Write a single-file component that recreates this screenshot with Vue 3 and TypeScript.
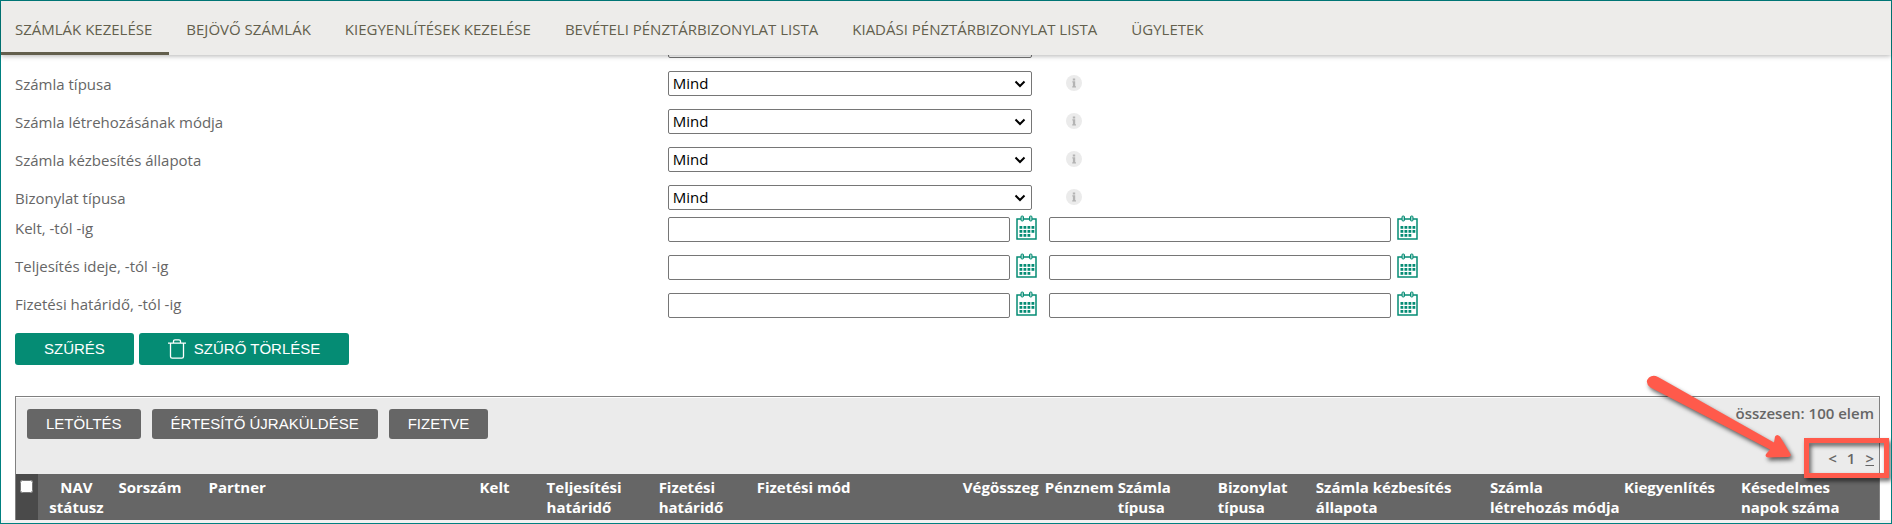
<script setup lang="ts">
import { ref } from 'vue'

interface Tab { label: string; active?: boolean }
interface Column { label: string; width: number; align?: 'center' | 'right' }

const tabs: Tab[] = [
  { label: 'SZÁMLÁK KEZELÉSE', active: true },
  { label: 'BEJÖVŐ SZÁMLÁK' },
  { label: 'KIEGYENLÍTÉSEK KEZELÉSE' },
  { label: 'BEVÉTELI PÉNZTÁRBIZONYLAT LISTA' },
  { label: 'KIADÁSI PÉNZTÁRBIZONYLAT LISTA' },
  { label: 'ÜGYLETEK' },
]

const selects = ref([
  { id: 'tipus', label: 'Számla típusa', value: 'Mind' },
  { id: 'mod', label: 'Számla létrehozásának módja', value: 'Mind' },
  { id: 'kezbesites', label: 'Számla kézbesítés állapota', value: 'Mind' },
  { id: 'bizonylat', label: 'Bizonylat típusa', value: 'Mind' },
])

const ranges = ref([
  { id: 'kelt', label: 'Kelt, -tól -ig', from: '', to: '' },
  { id: 'teljesites', label: 'Teljesítés ideje, -tól -ig', from: '', to: '' },
  { id: 'fizetes', label: 'Fizetési határidő, -tól -ig', from: '', to: '' },
])

const actions: string[] = ['LETÖLTÉS', 'ÉRTESÍTŐ ÚJRAKÜLDÉSE', 'FIZETVE']

const columns: Column[] = [
  { label: 'NAV státusz', width: 76, align: 'center' },
  { label: 'Sorszám', width: 90 },
  { label: 'Partner', width: 271 },
  { label: 'Kelt', width: 67 },
  { label: 'Teljesítési határidő', width: 112 },
  { label: 'Fizetési határidő', width: 98 },
  { label: 'Fizetési mód', width: 182 },
  { label: 'Végösszeg', width: 106, align: 'right' },
  { label: 'Pénznem', width: 73 },
  { label: 'Számla típusa', width: 100 },
  { label: 'Bizonylat típusa', width: 98 },
  { label: 'Számla kézbesítés állapota', width: 174 },
  { label: 'Számla létrehozás módja', width: 134 },
  { label: 'Kiegyenlítés', width: 117 },
  { label: 'Késedelmes napok száma', width: 142 },
]

// Dots of the calendar icon: four columns, the last row is one short.
const dots = Array.from({ length: 11 }, (_, i) => ({ x: 4 + (i % 4) * 4, y: 11 + Math.floor(i / 4) * 4 }))
</script>

<template>
  <div class="page">
    <nav class="tabs">
      <a v-for="tab in tabs" :key="tab.label" href="#" class="tab" :class="{ active: tab.active }">{{ tab.label }}</a>
    </nav>

    <main class="content">
      <form class="filter" @submit.prevent>
        <div class="row">
          <span></span>
          <select class="field" aria-label="Szűrő"><option></option></select>
        </div>
        <div v-for="s in selects" :key="s.id" class="row">
          <label :for="s.id">{{ s.label }}</label>
          <div class="picker">
            <select :id="s.id" v-model="s.value" class="field"><option>Mind</option></select>
            <svg class="chevron" viewBox="0 0 12 8" aria-hidden="true">
              <path d="M1.500 1.500L6 6l4.500-4.500" fill="none" stroke="#000" stroke-width="2" />
            </svg>
          </div>
          <svg class="info" viewBox="0 0 16 16" aria-hidden="true">
            <circle cx="8" cy="8" r="8" fill="#ebebeb" />
            <path d="M6.800 3.500h2.400v2H6.800zM6.300 6.300h2.900v5h.8v1.200H6.200v-1.200h.7V7.500h-.6z" fill="#b4b4b4" />
          </svg>
        </div>
        <div class="ranges">
          <div v-for="r in ranges" :key="r.id" class="row">
            <label :for="r.id">{{ r.label }}</label>
            <div v-for="end in (['from', 'to'] as const)" :key="end" class="date">
              <input :id="end === 'from' ? r.id : r.id + '-ig'" v-model="r[end]" type="text" class="field" :aria-label="r.label">
              <button type="button" class="calendar" aria-label="Naptár">
                <svg viewBox="0 0 21 25" aria-hidden="true">
                  <path d="M1 4h19v20H1z" fill="#fff" stroke="#058c74" stroke-width="1.500" />
                  <rect x="5" y="1" width="2.500" height="5" rx="1" fill="#9fd2c9" stroke="#058c74" />
                  <rect x="13.500" y="1" width="2.500" height="5" rx="1" fill="#9fd2c9" stroke="#058c74" />
                  <rect v-for="(d, i) in dots" :key="i" :x="d.x - 0.5" :y="d.y" width="2.800" height="2.800" fill="#058c74" />
                </svg>
              </button>
            </div>
          </div>
        </div>
        <div class="submit">
          <button type="submit" class="green">SZŰRÉS</button>
          <button type="reset" class="green">
            <svg class="trash" viewBox="0 0 18 20" aria-hidden="true">
              <path d="M0 4.200h18M5.500 4V2.200Q5.500.8 7 .8h4q1.500 0 1.500 1.400V4M2.500 4.200V17.500Q2.500 19.200 4.200 19.200h9.600q1.700 0 1.700-1.700V4.200" fill="none" stroke="#fff" stroke-width="1.300" />
            </svg>
            SZŰRŐ TÖRLÉSE
          </button>
        </div>
      </form>

      <section class="panel">
        <div class="toolbar">
          <div class="actions">
            <button v-for="a in actions" :key="a" type="button" class="gray">{{ a }}</button>
          </div>
          <div class="summary">
            <span>összesen: 100 elem</span>
            <div class="pager"><span>&lt;</span><span>1</span><a href="#">&gt;</a></div>
          </div>
        </div>
        <table>
          <colgroup>
            <col class="check-col">
            <col v-for="c in columns" :key="c.label" :style="{ width: (c.width / 1840) * 98.8 + '%' }">
          </colgroup>
          <thead>
            <tr>
              <th class="check"><input type="checkbox" aria-label="Összes kijelölése"></th>
              <th v-for="c in columns" :key="c.label" scope="col" :class="c.align">{{ c.label }}</th>
            </tr>
          </thead>
        </table>
        <svg class="callout" viewBox="0 0 252 125" aria-hidden="true">
          <g fill="#ff5a4b">
            <path d="M9 7.500Q13 4.500 18 7L134 72.500L135 66.500Q137 63.500 140 66.500L150.500 84Q151.500 87 148 87L128 87.500Q124 86.500 126.500 83.500L130 79.500L10.500 17.500Q4 12.500 9 7.500Z" />
            <path fill-rule="evenodd" d="M164 68h85v40h-85zM169 73v30h75V73z" />
          </g>
        </svg>
      </section>
    </main>
  </div>
</template>

<style>
body { margin: 0; }
</style>

<style scoped>
* { box-sizing: border-box; }
.page {
  min-height: 100vh;
  border: 1px solid #008080;
  background: #fff;
  color: #666;
  font: 15px/20px "Open Sans", sans-serif;
  display: flex;
  flex-direction: column;
}
.tabs {
  position: relative;
  z-index: 1;
  display: flex;
  height: 54px;
  background: #edecea;
  box-shadow: 0 1px 5px rgba(0, 0, 0, 0.3);
}
.tab {
  padding: 18px 17px 0;
  border-bottom: 3px solid transparent;
  color: #635f4d;
  font-weight: 500;
  text-decoration: none;
  white-space: nowrap;
}
.tab:first-child { padding-left: 14px; }
.tab.active { border-color: #635f4d; }
.content {
  flex: 1;
  margin-top: -22px;
  padding: 0 11px 0 14px;
  border-bottom: 3px solid #f2f1f1;
  overflow: hidden;
}
.filter { display: flex; flex-direction: column; gap: 13px; }
.row { display: grid; grid-template-columns: 35% 364px auto; align-items: center; }
.field {
  display: block;
  width: 100%;
  height: 25px;
  margin: 0;
  border: 1px solid #767676;
  border-radius: 2px;
  background: #fff;
  color: #000;
  font: 15px/20px "Open Sans", sans-serif;
  padding: 0 4px 2px;
}
select.field { appearance: none; }
.picker { display: grid; align-items: center; }
.picker > * { grid-area: 1 / 1; }
.chevron { width: 12px; height: 8px; margin-right: 6px; justify-self: end; pointer-events: none; }
.info { width: 16px; height: 16px; margin: 0 0 2px 34px; }
.ranges { display: flex; flex-direction: column; gap: 13px; margin-top: -6px; }
.ranges .row { grid-template-columns: 35% 381px 381px; }
.ranges label { padding-bottom: 3px; }
.date { display: flex; gap: 6px; }
.date .field { width: 342px; }
.calendar { display: flex; width: 21px; height: 25px; margin-top: -2px; padding: 0; border: 0; background: none; }
.calendar svg { width: 21px; height: 25px; }
.submit { display: flex; gap: 5px; margin-top: 2px; }
button { font: 15px/20px "Liberation Sans", Arial, sans-serif; color: #fff; cursor: pointer; }
.green {
  display: flex;
  align-items: center;
  gap: 8px;
  height: 32px;
  padding: 0 29px;
  border: 0;
  border-radius: 3px;
  background: #058c74;
}
.trash { width: 18px; height: 20px; }
.panel {
  position: relative;
  margin-top: 31px;
  border: 1px solid #808080;
  border-bottom: 0;
}
.toolbar {
  display: flex;
  justify-content: space-between;
  height: 77px;
  padding: 11px 5px 0 11px;
  border-top: 1px solid #fff;
  background: #ebebeb;
}
.actions { display: flex; gap: 11px; }
.gray { height: 30px; padding: 0 19px; border: 0; border-radius: 3px; background: #666; }
.summary { display: flex; flex-direction: column; align-items: flex-end; gap: 25px; margin-top: -6px; font-weight: 600; }
.pager { display: flex; gap: 10px; }
.pager a { color: inherit; }
table { width: 100%; table-layout: fixed; border-collapse: collapse; background: #666; color: #fff; }
.check-col { width: 22px; }
th { height: 46px; padding: 3px 0 3px 4px; font-weight: 700; text-align: left; vertical-align: top; }
th.center { padding-right: 4px; text-align: center; }
th.right { padding-right: 2px; text-align: right; }
th.check { padding: 6px 4px; background: #4a4a4a; }
.check input { display: block; width: 13px; height: 13px; margin: 0; }
.callout {
  position: absolute;
  top: -27px;
  right: -13px;
  width: 252px;
  height: 125px;
  pointer-events: none;
  filter: drop-shadow(2px 3px 2px rgba(0, 0, 0, 0.6));
}
</style>
